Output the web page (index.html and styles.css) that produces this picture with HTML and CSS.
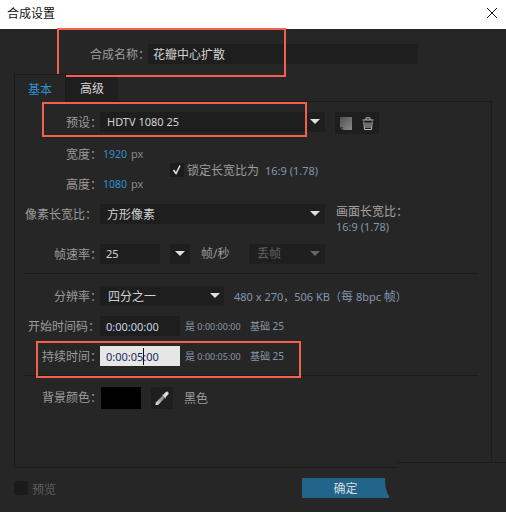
FILE: index.html
```html
<!DOCTYPE html>
<html lang="zh">
<head>
<meta charset="utf-8">
<title>合成设置</title>
<link rel="stylesheet" href="styles.css">
</head>
<body>
<div class="dialog">
  <header class="titlebar">
    <span class="title">合成设置</span>
    <svg class="close" width="12" height="12" viewBox="0 0 12 12"><path d="M1 1L11 11M11 1L1 11" stroke="#111" stroke-width="1" fill="none"/></svg>
  </header>
  <div class="name-row">
    <span class="label">合成名称&#xFF1A;</span>
    <div class="field name-field">花瓣中心扩散</div>
  </div>
  <div class="tabs">
    <div class="tab active">基本</div>
    <div class="tab">高级</div>
  </div>
  <section class="panel">
    <div class="row preset-row">
      <span class="label">预设&#xFF1A;</span>
      <div class="field select preset-select latin">HDTV 1080 25<i class="caret"></i></div>
      <div class="iconbtns">
        <svg width="12" height="13" viewBox="0 0 12 13"><defs><linearGradient id="g" x1="0" y1="0" x2="1" y2="1"><stop offset="0" stop-color="#505050"/><stop offset="1" stop-color="#8a8a8a"/></linearGradient></defs><path d="M0 0H12V13H3V10H0Z" fill="url(#g)"/><path d="M0 10.500H2.500V13Z" fill="#6e6e6e"/></svg>
        <svg width="12" height="13" viewBox="0 0 12 13"><path d="M0.500 3H11.500M4 3V0.800H8V3M1.800 4.500L2.500 12.500H9.500L10.200 4.500M4 5.500V11M6 5.500V11M8 5.500V11" stroke="#bcbcbc" stroke-width="1" fill="none"/></svg>
      </div>
    </div>
    <div class="dims">
      <div class="dim-col">
        <div class="dim"><span class="label">宽度&#xFF1A;</span><span class="blue">1920</span><span class="unit">px</span></div>
        <div class="dim"><span class="label">高度&#xFF1A;</span><span class="blue">1080</span><span class="unit">px</span></div>
      </div>
      <div class="lock">
        <span class="check"><svg width="14" height="14" viewBox="0 0 14 14"><path d="M3.500 7L6 10.500L10 2.500" stroke="#e6e6e6" stroke-width="1.500" fill="none"/></svg></span>
        <span class="lock-text">锁定长宽比为</span>
        <span class="small-val">16:9 (1.78)</span>
      </div>
    </div>
    <div class="row pixel-row">
      <span class="label label-pixel">像素长宽比&#xFF1A;</span>
      <div class="field select pixel-select">方形像素<i class="caret"></i></div>
      <div class="ratio"><div>画面长宽比&#xFF1A;</div><div class="small-val">16:9 (1.78)</div></div>
    </div>
    <div class="row fps-row">
      <span class="label">帧速率&#xFF1A;</span>
      <div class="field fps-field latin">25</div>
      <div class="field select fps-btn"><i class="caret"></i></div>
      <span class="fps-unit">帧/秒</span>
      <div class="field select drop-select">丢帧<i class="caret dim-caret"></i></div>
    </div>
    <hr class="rule rule-first">
    <div class="row res-row">
      <span class="label">分辨率&#xFF1A;</span>
      <div class="field select res-select">四分之一<i class="caret"></i></div>
      <span class="res-info">480 x 270&#xFF0C;506 KB&#xFF08;<span class="cjk">每</span> 8bpc <span class="cjk">帧</span>&#xFF09;</span>
    </div>
    <div class="row time-row">
      <span class="label label-start">开始时间码&#xFF1A;</span>
      <div class="field time-field">0:00:00:00</div>
      <span class="time-info"><span class="cjk10">是</span> 0:00:00:00 <span class="cjk10 base">基础 25</span></span>
    </div>
    <div class="row time-row">
      <span class="label">持续时间&#xFF1A;</span>
      <div class="field time-field editing">0:00:05<i class="text-caret"></i>:00</div>
      <span class="time-info"><span class="cjk10">是</span> 0:00:05:00 <span class="cjk10 base">基础 25</span></span>
    </div>
    <hr class="rule rule-second">
    <div class="row bg-row">
      <span class="label">背景颜色&#xFF1A;</span>
      <div class="swatch"></div>
      <div class="picker"><svg width="14" height="15" viewBox="0 0 14 15"><defs><linearGradient id="d" x1="0" y1="1" x2="1" y2="0"><stop offset="0" stop-color="#e8e8e8"/><stop offset="0.7" stop-color="#8a8a8a"/></linearGradient></defs><path d="M0.500 14L0.800 11.500L7.500 4.800L9.800 7.100L3 14Z" fill="url(#d)"/><path d="M6.800 3.800L8.300 3.800L10.500 1.200C11.300 0.400 12.800 0.400 13.300 1.200C13.900 2 13.800 3 13 3.800L10.800 6V7.800Z" fill="#dcdcdc"/></svg></div>
      <span class="bg-name">黑色</span>
    </div>
  </section>
  <footer class="footer">
    <span class="preview-box"></span>
    <span class="preview-text">预览</span>
    <div class="ok">确定</div>
  </footer>
  <div class="cover"></div>
  <div class="mark mark-name"></div>
  <div class="mark mark-preset"></div>
  <div class="mark mark-time"></div>
</div>
</body>
</html>
```
FILE: styles.css
```css
* { box-sizing: border-box; }
html, body { margin: 0; padding: 0; }
body {
  width: 506px;
  height: 512px;
  overflow: hidden;
  background: #262626;
  font-family: "Noto Sans", "Noto Sans CJK SC", sans-serif;
  font-size: 12px;
  color: #9c9c9c;
}
.dialog { position: relative; width: 506px; height: 512px; background: #262626; }
.titlebar {
  height: 29px;
  background: #fff;
  display: flex;
  align-items: center;
  justify-content: space-between;
  padding: 0 8px 1px 7px;
  color: #111;
}
.title { font-size: 12px; line-height: 16px; }
.close { display: block; margin-top: -3px; }

.label { flex: none; display: block; width: 87px; margin-right: -2px; text-align: right; line-height: 22px; height: 20px; white-space: nowrap; font-size: 12px; }
.label-pixel { padding-right: 5px; }
.label-start { padding-right: 2px; }
.field {
  background: #1e1e1e;
  height: 20px;
  line-height: 21px;
  color: #d2d2d2;
  flex: none;
  position: relative;
}
.latin { font-size: 11px; line-height: 20px; }
.name-row { display: flex; height: 20px; margin: 15px 0 0 63px; }
.name-field { width: 270px; padding-left: 5px; }
.tabs { display: flex; margin: 10px 0 0 14px; height: 27px; }
.tab { width: 52px; height: 27px; line-height: 30px; text-align: center; background: #1f1f1f; color: #d8d8d8; }
.tab.active { background: #262626; color: #2f90cd; border: 1px solid #1b1b1b; border-bottom: 0; position: relative; z-index: 1; height: 28px; }

.panel { width: 478px; height: 367px; margin-left: 14px; border: 1px solid #1b1b1b; padding-top: 10px; }
.row { display: flex; }
.caret {
  position: absolute;
  top: 7px;
  right: 5px;
  width: 0;
  height: 0;
  border-left: 5px solid transparent;
  border-right: 5px solid transparent;
  border-top: 5px solid #e0e0e0;
}
.preset-select, .pixel-select { width: 225px; padding-left: 7px; }
.preset-row { height: 22px; align-items: flex-start; }
.iconbtns {
  margin-left: 10px;
  width: 44px;
  height: 22px;
  background: #1e1e1e;
  display: flex;
  align-items: center;
  padding-left: 5px;
  gap: 10px;
}
.iconbtns svg { display: block; }
.dims { display: flex; margin-top: 10px; height: 50px; }
.dim-col { width: 155px; flex: none; }
.dim { display: flex; height: 20px; margin-bottom: 10px; line-height: 20px; font-size: 10.500px; }
.blue { color: #2f90cd; margin-left: 3px; }
.unit { color: #8a8a8a; margin-left: 4px; font-size: 11px; }
.lock { display: flex; align-items: center; height: 14px; margin-top: 19px; white-space: nowrap; }
.check { display: block; width: 14px; height: 14px; background: #1b1b1b; }
.check svg { display: block; }
.lock-text { margin-left: 3px; }
.small-val { color: #8397ad; font-size: 11px; margin-left: 6px; }
.pixel-row { margin-top: 10px; height: 20px; }
.ratio { margin-left: 11px; line-height: 15px; margin-top: 0; color: #a4a4a4; white-space: nowrap; }
.ratio .small-val { margin-left: 0; }
.fps-row { margin-top: 20px; height: 20px; }
.fps-row .label { line-height: 21px; }
.fps-field { width: 60px; padding-left: 6px; }
.fps-btn { width: 20px; margin-left: 10px; }
.fps-unit { margin-left: 11px; line-height: 20px; width: 38px; }
.drop-select { width: 76px; margin-left: 10px; padding-left: 8px; line-height: 20px; color: #5f5f5f; background: #1f1f1f; }
.dim-caret { border-top-color: #666; }
.rule { border: 0; height: 1px; background: #1b1b1b; margin: 0 0 0 9px; width: 454px; }
.rule-first { margin-top: 9px; }
.res-row { margin-top: 12px; height: 20px; }
.res-select { width: 124px; padding-left: 8px; }
.res-select .caret { right: 4px; }
.res-info { margin-left: 10px; line-height: 21px; color: #8397ad; font-size: 11px; white-space: nowrap; }
.cjk { font-size: 12px; }
.time-row { margin-top: 10px; height: 20px; }
.time-field { width: 80px; padding-left: 6px; color: #c8d3e2; font-size: 11px; }
.editing { background: #e6e6e6; color: #1c2a5a; }
.text-caret { display: inline-block; width: 1px; height: 17px; background: #111; vertical-align: -4px; margin-right: -1px; }
.time-info { margin-left: 5px; line-height: 21px; font-size: 9px; color: #8a96a6; white-space: nowrap; }
.cjk10 { font-size: 10px; }
.base { margin-left: 7px; }
.rule-second { margin-top: 9px; }
.bg-row { margin-top: 11px; height: 22px; line-height: 22px; }
.swatch { width: 40px; height: 22px; background: #000; margin-left: 1px; }
.picker { width: 22px; height: 22px; margin-left: 10px; background: #1e1e1e; display: flex; align-items: center; justify-content: center; }
.picker svg { display: block; }
.bg-name { margin-left: 11px; color: #9c9c9c; line-height: 23px; }

.footer { display: flex; align-items: flex-start; padding: 13px 0 0 14px; height: 44px; }
.preview-box { width: 14px; height: 14px; background: #1b1b1b; flex: none; }
.preview-text { margin-left: 4px; color: #5f5f5f; line-height: 18px; }
.ok {
  position: relative;
  overflow: hidden;
  margin-left: 246px;
  margin-top: -3px;
  width: 87px;
  height: 20px;
  line-height: 22px;
  text-align: center;
  background: #22648a;
  color: #dcdcdc;
}
.ok::after {
  content: "";
  position: absolute;
  right: -11px;
  top: -16px;
  width: 15px;
  height: 36px;
  border-radius: 50%;
  background: #262626;
}
.cover {
  position: absolute;
  left: 397px;
  top: 462px;
  width: 109px;
  height: 50px;
  background: #262626;
  border-top: 1px solid #1b1b1b;
  box-shadow: -7px 6px 0 0 #262626;
}
.mark { position: absolute; border: 2px solid #f45f50; pointer-events: none; }
.mark-name { left: 57px; top: 28px; width: 229px; height: 49px; }
.mark-preset { left: 42px; top: 102px; width: 265px; height: 35px; }
.mark-time { left: 36px; top: 341px; width: 265px; height: 37px; }
```
